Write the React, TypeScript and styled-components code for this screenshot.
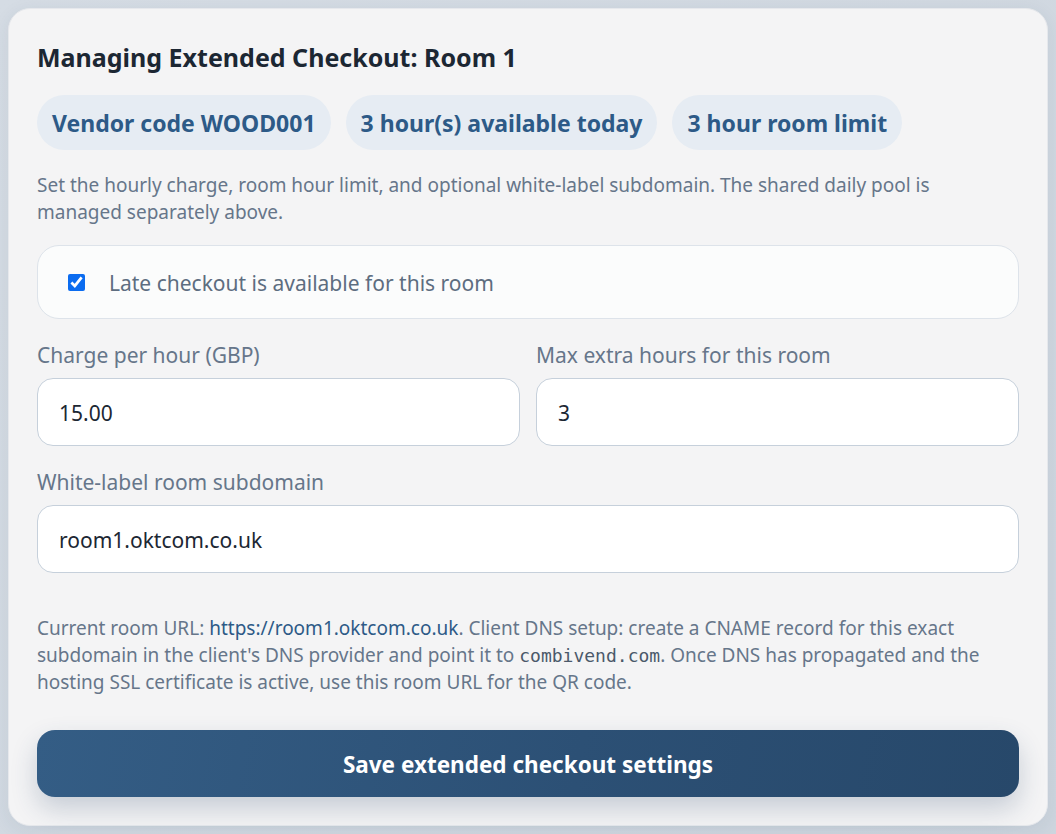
import React from "react";
import styled, { createGlobalStyle } from "styled-components";

const Global = createGlobalStyle`
  html, body { margin: 0; padding: 0; }
  body {
    background: linear-gradient(135deg, #d5dce4 0%, #cdd5de 100%);
    font-family: "Noto Sans", "Open Sans", sans-serif;
    min-height: 834px;
  }
  * { box-sizing: border-box; }
`;

const Page = styled.div`
  padding: 8px;
`;

const Card = styled.section`
  background: #f4f4f5;
  border: 1px solid #e6e8ec;
  border-radius: 22px;
  padding: 32px 28px 28px 28px;
  display: flex;
  flex-direction: column;
  box-shadow: 0 4px 18px rgba(40, 60, 90, 0.08);
`;

const Title = styled.h2`
  margin: 0;
  font-size: 25px;
  font-weight: 700;
  color: #1c2733;
  line-height: 32px;
`;

const Chips = styled.div`
  display: flex;
  gap: 15px;
  margin-top: 22px;
`;

const Chip = styled.span`
  background: #e6ecf3;
  color: #2d5a87;
  font-weight: 700;
  font-size: 23px;
  height: 55px;
  display: inline-flex;
  align-items: center;
  padding: 0 15px;
  border-radius: 999px;
`;

const Help = styled.p`
  margin: 22px 0 0;
  font-size: 19px;
  line-height: 27px;
  color: #66768a;
`;

const ToggleBox = styled.label`
  margin-top: 19px;
  height: 74px;
  border: 1px solid #dde3ea;
  background: #fbfcfc;
  border-radius: 22px;
  display: flex;
  align-items: center;
  padding: 2px 0 0 30px;
  gap: 24px;
  font-size: 21px;
  color: #5d6d80;
`;

const Check = styled.input`
  width: 17px;
  height: 17px;
  margin: -2px 0 0;
  accent-color: #0b6cf0;
`;

const Grid = styled.div`
  display: grid;
  grid-template-columns: 1fr 1fr;
  gap: 16px;
  margin-top: 22px;
`;

const Field = styled.div<{ $top?: number }>`
  display: flex;
  flex-direction: column;
  gap: 9px;
  margin-top: ${(p) => p.$top ?? 0}px;
`;

const Label = styled.label`
  font-size: 21px;
  color: #66768a;
  line-height: 28px;
`;

const Input = styled.input`
  height: 68px;
  border: 1px solid #c6d0db;
  border-radius: 16px;
  background: #ffffff;
  padding: 2px 21px 0;
  font-family: inherit;
  font-size: 21px;
  color: #1c2733;
  outline: none;
  width: 100%;
`;

const Note = styled.p`
  margin: 42px 0 0;
  font-size: 19px;
  line-height: 27px;
  color: #66768a;
`;

const Link = styled.a`
  color: #2d5a87;
  text-decoration: none;
`;

const Code = styled.code`
  font-family: "DejaVu Sans Mono", "Liberation Mono", monospace;
  font-size: 18px;
  font-weight: 400;
  color: #4b596a;
`;

const SaveButton = styled.button`
  margin-top: 34px;
  height: 67px;
  border: none;
  border-radius: 18px;
  background: linear-gradient(100deg, #345d85 0%, #2c5075 55%, #27486a 100%);
  color: #ffffff;
  font-family: inherit;
  font-size: 22.5px;
  font-weight: 700;
  padding-top: 3px;
  box-shadow: 0 12px 26px rgba(40, 70, 105, 0.22);
  cursor: pointer;
`;

export default function App() {
  return (
    <Page>
      <Global />
      <Card>
        <Title>Managing Extended Checkout: Room 1</Title>
        <Chips>
          <Chip>Vendor code WOOD001</Chip>
          <Chip>3 hour(s) available today</Chip>
          <Chip>3 hour room limit</Chip>
        </Chips>
        <Help>
          Set the hourly charge, room hour limit, and optional white-label subdomain. The shared daily pool is
          managed separately above.
        </Help>
        <ToggleBox>
          <Check type="checkbox" defaultChecked />
          Late checkout is available for this room
        </ToggleBox>
        <Grid>
          <Field>
            <Label>Charge per hour (GBP)</Label>
            <Input defaultValue="15.00" />
          </Field>
          <Field>
            <Label>Max extra hours for this room</Label>
            <Input defaultValue="3" />
          </Field>
        </Grid>
        <Field $top={22}>
          <Label>White-label room subdomain</Label>
          <Input defaultValue="room1.oktcom.co.uk" />
        </Field>
        <Note>
          Current room URL: <Link href="#">https://room1.oktcom.co.uk</Link>. Client DNS setup: create a CNAME record for this exact
          subdomain in the client's DNS provider and point it to <Code>combivend.com</Code>. Once DNS has propagated and the
          hosting SSL certificate is active, use this room URL for the QR code.
        </Note>
        <SaveButton>Save extended checkout settings</SaveButton>
      </Card>
    </Page>
  );
}
